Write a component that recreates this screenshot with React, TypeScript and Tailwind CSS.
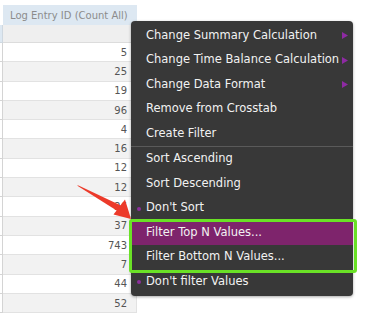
const values = [5, 25, 19, 96, 4, 16, 12, 12, 26, 37, 743, 7, 44, 52];

type Item = {
  label: string;
  sub?: boolean;
  dot?: boolean;
  active?: boolean;
  sepBefore?: boolean;
};

const items: Item[] = [
  { label: "Change Summary Calculation", sub: true },
  { label: "Change Time Balance Calculation", sub: true },
  { label: "Change Data Format", sub: true },
  { label: "Remove from Crosstab" },
  { label: "Create Filter" },
  { label: "Sort Ascending", sepBefore: true },
  { label: "Sort Descending" },
  { label: "Don't Sort", dot: true },
  { label: "Filter Top N Values...", active: true },
  { label: "Filter Bottom N Values..." },
  { label: "Don't filter Values", dot: true }
];

function MenuRow({ item }: { item: Item }) {
  return (
    <>
      {item.sepBefore && <div className="h-px bg-[#5a5a5a]" />}
      <div
        className={`relative flex h-[24.5px] items-center pl-[15px] text-[11.5px] text-[#f2f2f2] ${
          item.active ? "bg-[#7e246c]" : ""
        }`}
      >
        {item.dot && (
          <span className="absolute left-[6px] top-[11px] h-[4px] w-[4px] rounded-full bg-[#8c2f9c]" />
        )}
        <span className="whitespace-nowrap">{item.label}</span>
        {item.sub && (
          <svg
            className="absolute right-[5px] top-[9px]"
            width="6"
            height="7"
            viewBox="0 0 6 7"
          >
            <path d="M0 0 L6 3.5 L0 7 Z" fill="#8e2aa3" />
          </svg>
        )}
      </div>
    </>
  );
}

export default function App() {
  return (
    <div
      className="relative h-[326px] w-[377px] overflow-hidden bg-white"
      style={{ fontFamily: '"DejaVu Sans", Verdana, sans-serif' }}
    >
      {/* crosstab column */}
      <div className="pt-[5px]">
        <div className="flex">
          <div className="w-[3px]" />
          <div className="flex h-[20px] w-[134px] items-center bg-[#dde8f2] pl-[7px] text-[10px] text-[#8c8c8c]">
            Log Entry ID (Count All)
          </div>
        </div>
        <div className="flex h-[18px]">
          <div className="w-[3px] border-r border-b border-[#cfd8e0] bg-[#dde8f2]" />
          <div className="w-[134px] border-r border-b border-[#dcdcdc] bg-[#efefef]" />
        </div>
        {values.map((v, i) => (
          <div key={i} className="flex h-[19.3px]">
            <div className="w-[3px] border-r border-b border-[#d4d4d4] bg-white" />
            <div
              className={`flex w-[134px] items-center justify-end border-r border-b border-[#e2e2e2] pr-[9px] text-[10px] text-[#555] ${
                i % 2 === 0 ? "bg-white" : "bg-[#f2f2f2]"
              }`}
            >
              {v}
            </div>
          </div>
        ))}
      </div>

      {/* context menu */}
      <div className="absolute left-[131px] top-[21px] w-[222px] rounded-[4px] bg-[#383838] py-[2px] shadow-[0_1px_3px_rgba(0,0,0,0.35)]">
        {items.map((item) => (
          <MenuRow key={item.label} item={item} />
        ))}
      </div>

      {/* annotation box */}
      <div className="absolute left-[129px] top-[219px] h-[54px] w-[228px] rounded-[3px] border-[3px] border-[#6ae126]" />

      {/* annotation arrow */}
      <svg
        className="absolute left-0 top-0"
        width="377"
        height="326"
        viewBox="0 0 377 326"
      >
        <path d="M77 185.5 L78.5 185.5 L122 206 L119 212 Z" fill="#ec3a2a" />
        <path d="M131 219 L113.5 214.5 L125 199.5 Z" fill="#ec3a2a" />
      </svg>
    </div>
  );
}
